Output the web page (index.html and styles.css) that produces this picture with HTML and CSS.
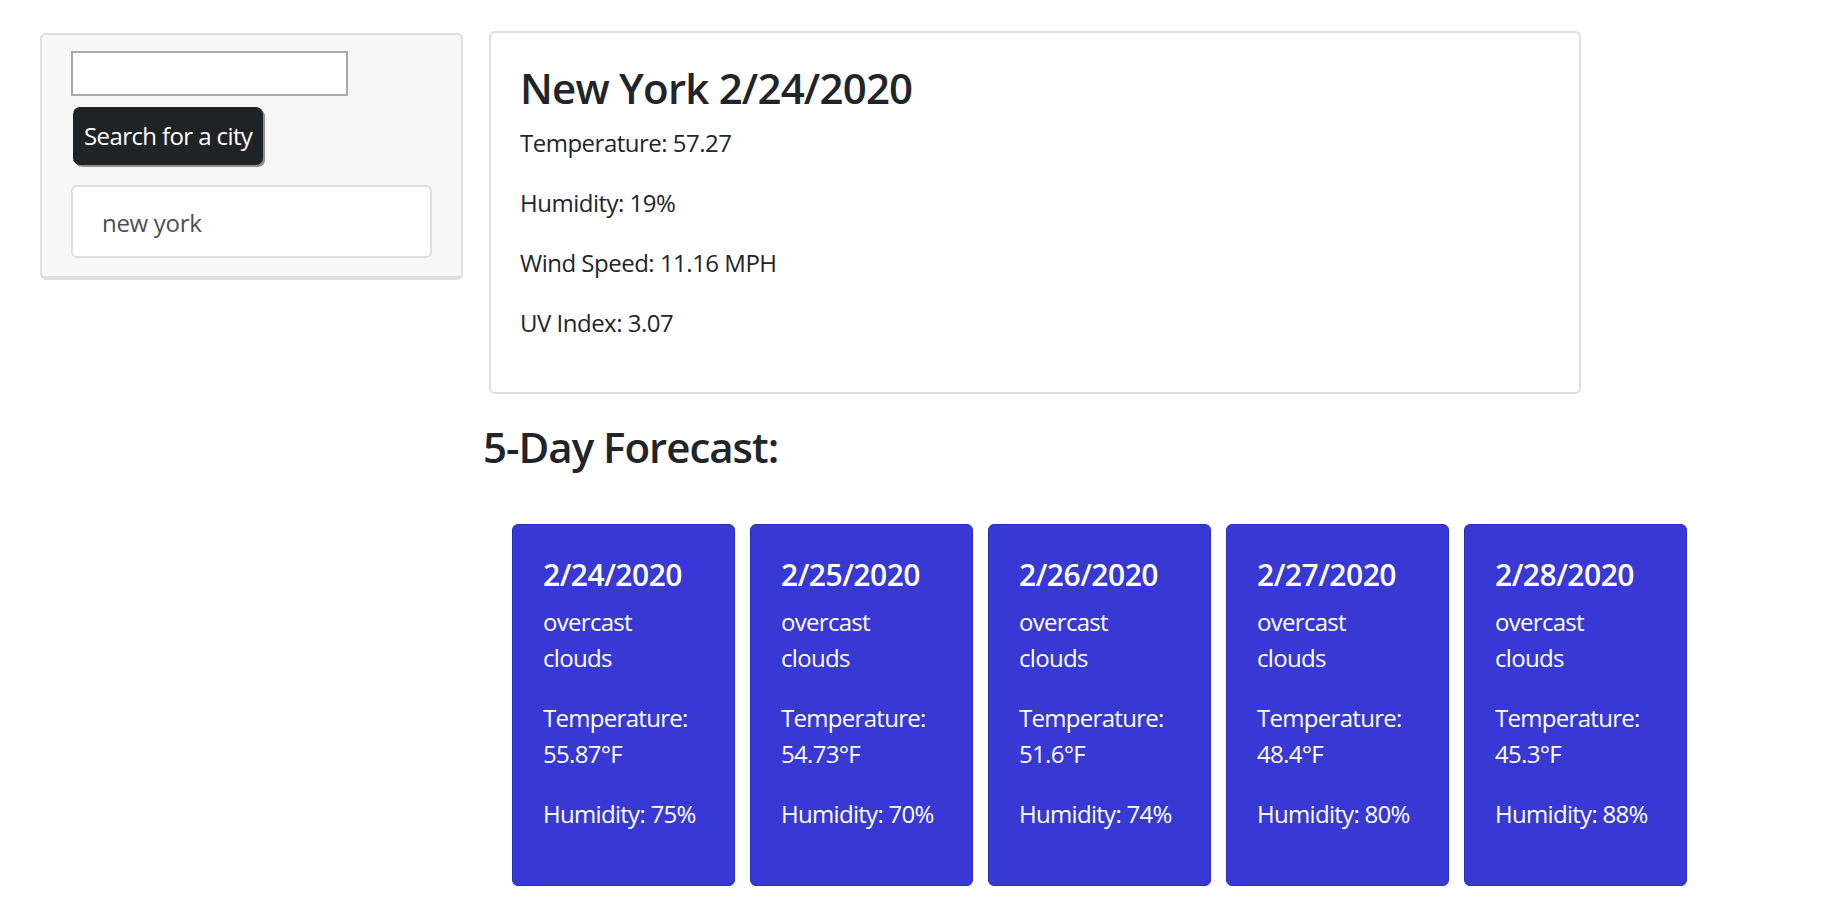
FILE: index.html
```html
<!DOCTYPE html>
<html lang="en">
<head>
<meta charset="utf-8">
<title>Weather Dashboard</title>
<link rel="stylesheet" href="styles.css">
</head>
<body>
<div class="page">
  <aside class="sidebar">
    <div class="search-card">
      <input class="city-input" type="text" aria-label="City">
      <button class="search-btn" type="button">Search for a city</button>
      <ul class="history">
        <li class="history-item">new york</li>
      </ul>
    </div>
  </aside>
  <main class="main">
    <section class="current-card">
      <h3 class="city-title">New York 2/24/2020</h3>
      <p class="stat">Temperature: 57.27</p>
      <p class="stat">Humidity: 19%</p>
      <p class="stat">Wind Speed: 11.16 MPH</p>
      <p class="stat">UV Index: 3.07</p>
    </section>
    <h3 class="forecast-title">5-Day Forecast:</h3>
    <div class="forecast-row">
      <div class="day-card">
        <h5 class="day-date">2/24/2020</h5>
        <p class="day-text">overcast clouds</p>
        <p class="day-text">Temperature: 55.87°F</p>
        <p class="day-text">Humidity: 75%</p>
      </div>
      <div class="day-card">
        <h5 class="day-date">2/25/2020</h5>
        <p class="day-text">overcast clouds</p>
        <p class="day-text">Temperature: 54.73°F</p>
        <p class="day-text">Humidity: 70%</p>
      </div>
      <div class="day-card">
        <h5 class="day-date">2/26/2020</h5>
        <p class="day-text">overcast clouds</p>
        <p class="day-text">Temperature: 51.6°F</p>
        <p class="day-text">Humidity: 74%</p>
      </div>
      <div class="day-card">
        <h5 class="day-date">2/27/2020</h5>
        <p class="day-text">overcast clouds</p>
        <p class="day-text">Temperature: 48.4°F</p>
        <p class="day-text">Humidity: 80%</p>
      </div>
      <div class="day-card">
        <h5 class="day-date">2/28/2020</h5>
        <p class="day-text">overcast clouds</p>
        <p class="day-text">Temperature: 45.3°F</p>
        <p class="day-text">Humidity: 88%</p>
      </div>
    </div>
  </main>
</div>
</body>
</html>
```
FILE: styles.css
```css
* { box-sizing: border-box; }

html, body {
  margin: 0;
  padding: 0;
  background: #ffffff;
}

body {
  font-family: "Open Sans", "Noto Sans", sans-serif;
  font-size: 24px;
  line-height: 36px;
  color: #212529;
}

.page {
  display: flex;
  align-items: flex-start;
  padding: 31px 0 0 40px;
}

.sidebar {
  width: 423px;
  margin-right: 18px;
  margin-top: 2px;
  flex: none;
}

.search-card {
  background: #f7f7f7;
  border: 2px solid #dedede;
  border-bottom-width: 4px;
  border-radius: 6px;
  padding: 16px 29px 18px 29px;
  display: flex;
  flex-direction: column;
  align-items: flex-start;
}

.city-input {
  width: 277px;
  height: 45px;
  border: 2px solid #a9a9a9;
  background: #fff;
  margin: 0;
  padding: 0 4px;
  font-family: inherit;
  font-size: 20px;
}

.search-btn {
  margin: 11px 0 0 2px;
  background: #1f2326;
  color: #fff;
  border: none;
  border-radius: 7px;
  box-shadow: 2px 2px 0 #8f8f8f;
  font-family: inherit;
  font-size: 24px;
  line-height: 36px;
  padding: 11px 11px 11px 11px;
  letter-spacing: -0.6px;
}

.history {
  list-style: none;
  margin: 20px 0 0 0;
  padding: 0;
  width: 100%;
}

.history-item {
  background: #fff;
  border: 2px solid #dedede;
  border-radius: 6px;
  padding: 18px 29px 15px 29px;
  color: #495057;
  line-height: 36px;
  letter-spacing: -0.3px;
}

.main {
  width: 1120px;
  flex: none;
}

.current-card {
  margin-left: 8px;
  width: 1092px;
  height: 363px;
  border: 2px solid #dedede;
  border-radius: 6px;
  padding: 31px 30px 30px 29px;
}

.city-title {
  margin: 0 0 13px 0;
  font-size: 42px;
  line-height: 48px;
  font-weight: 600;
  letter-spacing: -0.8px;
}

.stat {
  margin: 0 0 24px 0;
  letter-spacing: -0.5px;
}

.forecast-title {
  margin: 28px 0 0 2px;
  font-size: 42px;
  line-height: 50px;
  font-weight: 600;
  letter-spacing: -1px;
}

.forecast-row {
  display: flex;
  gap: 15px;
  margin-top: 52px;
  padding-left: 31px;
}

.day-card {
  width: 223px;
  height: 362px;
  flex: none;
  background: #3838d4;
  border: 1.5px solid #2d2dbd;
  border-radius: 6px;
  color: #ffffff;
  padding: 32px 30px 30px 30px;
}

.day-date {
  margin: 0 0 11px 0;
  font-size: 30px;
  line-height: 36px;
  font-weight: 600;
  letter-spacing: -0.5px;
}

.day-text {
  margin: 0 0 24px 0;
  letter-spacing: -0.7px;
}
```
